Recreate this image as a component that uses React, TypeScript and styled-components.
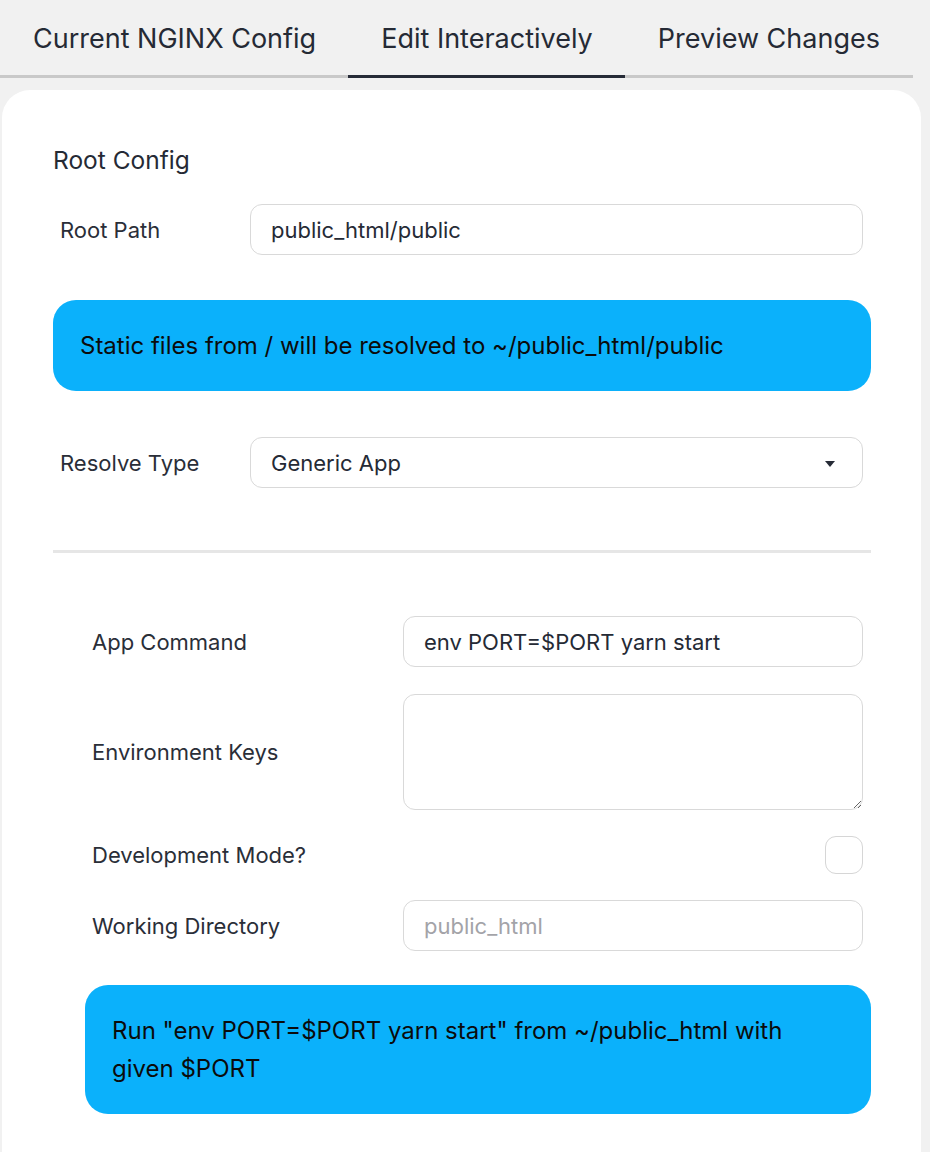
import React from "react";
import styled, { createGlobalStyle } from "styled-components";

const GlobalStyle = createGlobalStyle`
  html, body {
    margin: 0;
    padding: 0;
    background: #f1f1f1;
  }
  body {
    font-family: Inter, "Noto Sans", "Liberation Sans", sans-serif;
    color: #252a35;
    -webkit-font-smoothing: antialiased;
  }
  * { box-sizing: border-box; }
`;

const Page = styled.div`
  width: 930px;
  min-height: 1152px;
  overflow: hidden;
`;

const TabList = styled.div`
  display: flex;
  width: 913px;
  height: 78px;
  border-bottom: 3px solid #c9c9c9;
`;

const Tab = styled.div<{ $active?: boolean }>`
  display: flex;
  align-items: center;
  height: 78px;
  padding: 1px 32px 0 33px;
  margin-bottom: -3px;
  font-size: 27px;
  color: #252a35;
  border-bottom: 3px solid ${(p) => (p.$active ? "#262b37" : "transparent")};
  cursor: pointer;
  white-space: nowrap;
`;

const Card = styled.div`
  margin: 12px 9px 0 2px;
  background: #ffffff;
  border-radius: 28px 28px 0 0;
  padding: 55px 50px 60px 51px;
  min-height: 1100px;
`;

const SectionTitle = styled.div`
  font-size: 24.5px;
  line-height: 30px;
  color: #252a35;
  margin-bottom: 29px;
`;

const FormRow = styled.div<{ $label: number; $mb?: number }>`
  display: grid;
  grid-template-columns: ${(p) => p.$label}px 1fr;
  align-items: center;
  padding: 0 8px 0 7px;
  margin-bottom: ${(p) => p.$mb ?? 0}px;
`;

const Label = styled.label`
  font-size: 22px;
  color: #2a2e38;
`;

const TextInput = styled.input`
  width: 100%;
  height: 51px;
  padding: 0 20px;
  border: 1px solid #d9d9d9;
  border-radius: 12px;
  font-family: inherit;
  font-size: 22px;
  color: #252a35;
  background: #fff;
  outline: none;
  &::placeholder {
    color: #a3a3a8;
  }
`;

const TextArea = styled.textarea`
  width: 100%;
  height: 116px;
  padding: 12px 20px;
  border: 1px solid #d9d9d9;
  border-radius: 12px;
  font-family: inherit;
  font-size: 22px;
  color: #252a35;
  background: #fff;
  outline: none;
  display: block;
`;

const SelectWrap = styled.div`
  position: relative;
`;

const Select = styled.select`
  width: 100%;
  height: 51px;
  padding: 0 20px;
  border: 1px solid #d9d9d9;
  border-radius: 12px;
  font-family: inherit;
  font-size: 22px;
  color: #252a35;
  background: #fff;
  appearance: none;
  -webkit-appearance: none;
  outline: none;
`;

const Caret = styled.svg`
  position: absolute;
  right: 28px;
  top: 50%;
  margin-top: -2px;
  pointer-events: none;
`;

const Checkbox = styled.input`
  justify-self: end;
  appearance: none;
  -webkit-appearance: none;
  width: 38px;
  height: 38px;
  margin: 0;
  border: 1px solid #d6d6d6;
  border-radius: 11px;
  background: #fff;
`;

const Alert = styled.div<{ $mb?: number }>`
  background: #0bb1fb;
  color: #0b0b0b;
  border-radius: 23px;
  padding: 27px 50px 26px 27px;
  font-size: 24px;
  line-height: 38px;
  margin-bottom: ${(p) => p.$mb ?? 0}px;
`;

const Divider = styled.hr`
  border: none;
  height: 3px;
  background: #e6e6e6;
  margin: 62px 0 63px 0;
`;

const Nested = styled.div`
  margin-left: 32px;
`;

export default function App() {
  return (
    <Page>
      <GlobalStyle />
      <TabList>
        <Tab>Current NGINX Config</Tab>
        <Tab $active>Edit Interactively</Tab>
        <Tab>Preview Changes</Tab>
      </TabList>
      <Card>
        <SectionTitle>Root Config</SectionTitle>
        <FormRow $label={190} $mb={45}>
          <Label>Root Path</Label>
          <TextInput defaultValue="public_html/public" />
        </FormRow>
        <Alert $mb={46}>Static files from / will be resolved to ~/public_html/public</Alert>
        <FormRow $label={190}>
          <Label>Resolve Type</Label>
          <SelectWrap>
            <Select defaultValue="generic">
              <option value="generic">Generic App</option>
            </Select>
            <Caret width="10" height="6" viewBox="0 0 10 6">
              <path d="M0 0 H10 L5 6 Z" fill="#262b37" />
            </Caret>
          </SelectWrap>
        </FormRow>
        <Divider />
        <Nested>
          <FormRow $label={311} $mb={27}>
            <Label>App Command</Label>
            <TextInput defaultValue="env PORT=$PORT yarn start" />
          </FormRow>
          <FormRow $label={311} $mb={26}>
            <Label>Environment Keys</Label>
            <TextArea />
          </FormRow>
          <FormRow $label={311} $mb={26}>
            <Label>Development Mode?</Label>
            <Checkbox type="checkbox" />
          </FormRow>
          <FormRow $label={311} $mb={34}>
            <Label>Working Directory</Label>
            <TextInput placeholder="public_html" />
          </FormRow>
          <Alert>Run "env PORT=$PORT yarn start" from ~/public_html with given $PORT</Alert>
        </Nested>
      </Card>
    </Page>
  );
}
